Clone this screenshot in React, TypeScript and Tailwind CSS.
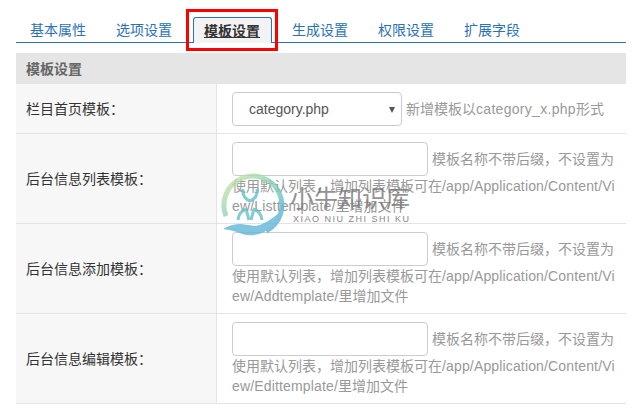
const font = { fontFamily: '"Liberation Sans","Noto Sans CJK SC",sans-serif' };

const tabs = ["基本属性", "选项设置", "模板设置", "生成设置", "权限设置", "扩展字段"];

function Tabs() {
  return (
    <div className="relative flex h-[26px] mt-[17px] pl-[14px] border-b border-[#2a72b5] text-[14px] leading-5">
      {tabs.map((t, i) =>
        i === 2 ? (
          <div key={t} className="relative z-10 w-[79px] h-[26px] -ml-[9px] mr-[20px] pl-[10px] pt-[3px] bg-[#f3f3f3] border border-b-0 border-[#2a72b5] rounded-t-[3px] text-[#333] font-bold underline">
            {t}
          </div>
        ) : (
          <div key={t} className="mr-[30px] pt-[3px] text-[#2a72b5] last:mr-0">
            {t}
          </div>
        ),
      )}
      <div className="absolute left-[170px] top-[-8px] w-[92px] h-[42px] border-[3px] border-[#ff0000] z-20" />
    </div>
  );
}

function Row({ label, name }: { label: string; name: string }) {
  return (
    <div className="flex h-[90px] border-b border-[#e4e4e4]">
      <div className="w-[201px] shrink-0 bg-[#f7f7f7] border-r border-[#e4e4e4] pl-[10px] pt-[2px] flex items-center text-[14px] text-[#333]">
        {label}
      </div>
      <div className="flex-1 pl-[15px] pr-[8px] pt-[8px] text-[14px] leading-5 text-[#999] break-all">
        <span className="inline-block w-[196px] h-[34px] align-middle mr-1 bg-white border border-[#ccc] rounded-[4px]" />
        <span className="relative top-[1px]">模板名称不带后缀，不设置为</span>使用默认列表，增加列表模板可在<span className="tracking-[0.15px]">/app/Application/Content/View/{name}/</span>里增加文件
      </div>
    </div>
  );
}

function Watermark() {
  return (
    <div className="absolute left-[220px] top-[172px] w-[200px] h-[66px] pointer-events-none">
      <svg width="66" height="66" viewBox="0 0 66 66" className="absolute left-0 top-0 opacity-80">
        <defs>
          <linearGradient id="ring" x1="0.1" y1="0.1" x2="0.8" y2="0.9">
            <stop offset="0" stopColor="#c3e3a6" />
            <stop offset="0.55" stopColor="#7fd0b8" />
            <stop offset="1" stopColor="#5ab4d6" />
          </linearGradient>
        </defs>
        <path d="M6 44 A29 29 0 1 1 46 59" fill="none" stroke="url(#ring)" strokeWidth="5" />
        <path d="M23 17 q-1 9 7 12 q8 -3 7 -12" fill="none" stroke="#66c0c8" strokeWidth="3" />
        <path d="M18 48 q1 -9 9 -11 M42 48 q-1 -9 -9 -11 M26 37 l3 11 M34 37 l-3 11" fill="none" stroke="#66c0c8" strokeWidth="3" />
        <path d="M3 57 q8 -5 18 -5 l14 2 q10 -1 24 -13 q-3 14 -17 20 q-10 4 -20 1 q-6 -3 -19 -5z" fill="#62b6d8" />
      </svg>
      <div className="absolute left-[70px] top-[13px] text-[24px] leading-[28px] text-[#777] opacity-80 whitespace-nowrap">小牛知识库</div>
      <div className="absolute left-[73px] top-[41px] text-[9px] leading-[12px] tracking-[1.5px] text-[#888] whitespace-nowrap">XIAO NIU ZHI SHI KU</div>
    </div>
  );
}

export default function App() {
  return (
    <div style={font} className="relative w-[632px] h-[409px] bg-white overflow-hidden pl-4 pr-[6px]">
      <Tabs />
      <div className="mt-[10px] h-[31px] bg-[#e5e5e5] pl-[10px] pt-[1px] flex items-center text-[14px] font-bold text-[#666]">模板设置</div>
      <div className="flex h-[50px] border-b border-[#e4e4e4]">
        <div className="w-[201px] shrink-0 bg-[#f7f7f7] border-r border-[#e4e4e4] pl-[10px] pt-[2px] flex items-center text-[14px] text-[#333]">栏目首页模板：</div>
        <div className="flex-1 pl-[15px] flex items-center text-[14px] text-[#999]">
          <div className="relative w-[170px] h-[34px] mr-1 bg-white border border-[#ccc] rounded-[4px] pl-4 pt-[1px] flex items-center text-[#555]">
            category.php
            <span className="absolute right-[6px] top-[14px] w-0 h-0 border-x-[3.5px] border-x-transparent border-t-[6px] border-t-[#555]" />
          </div>
          <span className="pt-[1px]">新增模板以<span className="tracking-[0.3px]">category_x.php</span>形式</span>
        </div>
      </div>
      <Row label="后台信息列表模板：" name="Listtemplate" />
      <Row label="后台信息添加模板：" name="Addtemplate" />
      <Row label="后台信息编辑模板：" name="Edittemplate" />
      <Watermark />
    </div>
  );
}
